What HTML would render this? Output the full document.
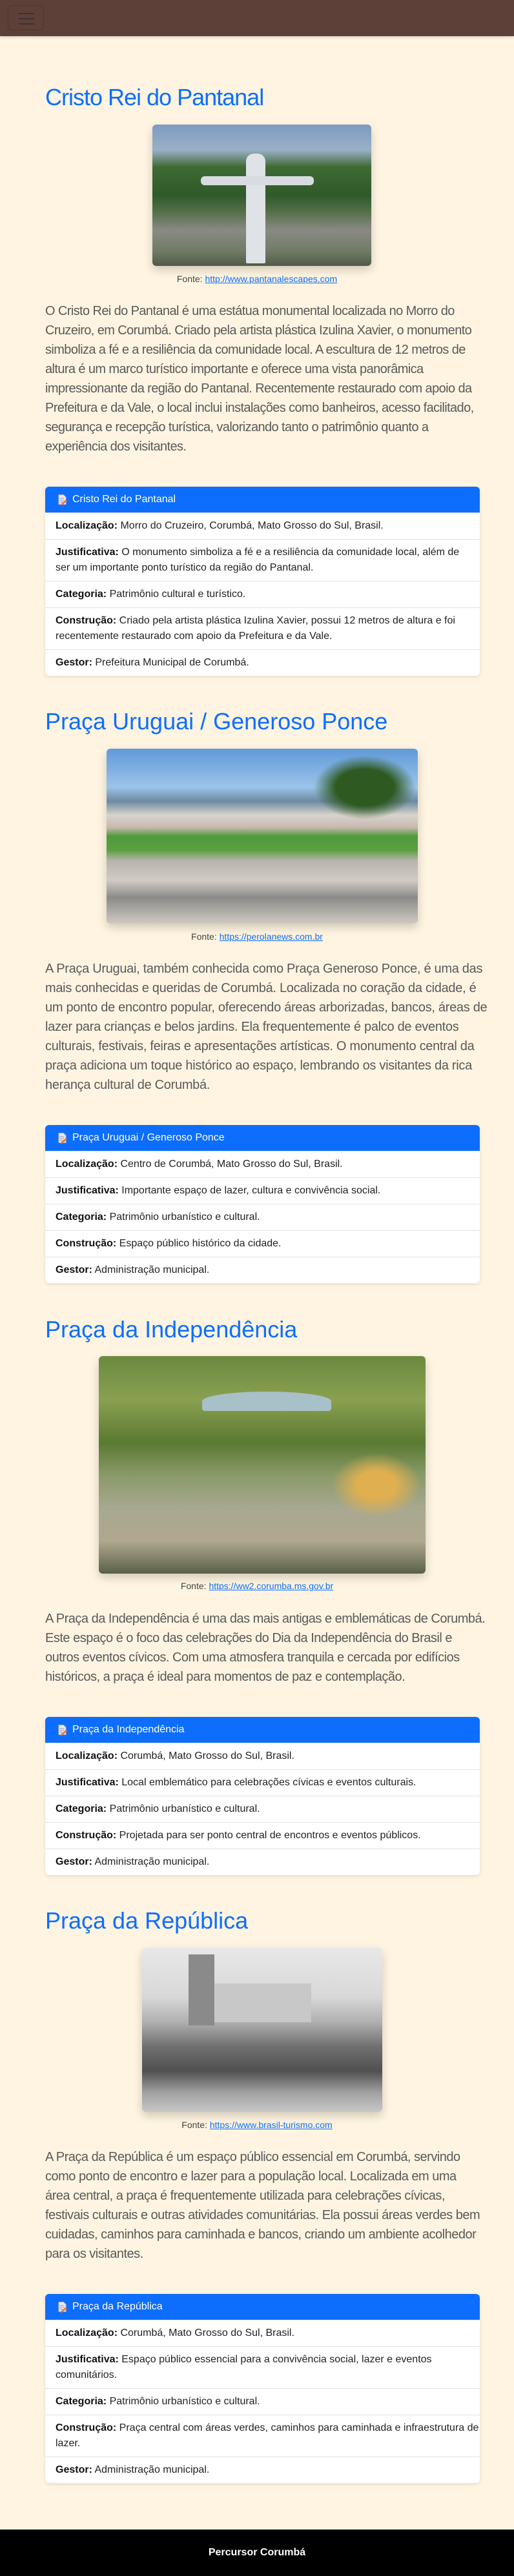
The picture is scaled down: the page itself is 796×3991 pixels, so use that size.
<!DOCTYPE html>
<html><head><meta charset="utf-8">
<style>
*{margin:0;padding:0;box-sizing:border-box}
html,body{width:796px;height:3991px;background:#fef4e1;font-family:"Liberation Sans",sans-serif;position:relative;overflow:hidden}
.nav{position:absolute;left:0;top:0;width:796px;height:56px;background:#5d4037;box-shadow:0 2px 4px rgba(0,0,0,.15)}
.tog{position:absolute;left:12px;top:8px;width:56px;height:39px;border:1px solid rgba(0,0,0,.15);border-radius:6px}
.tog i{position:absolute;left:16px;width:24px;height:2px;background:#3a3330}
.h{position:absolute;left:70px;color:#0d6efd;line-height:1;white-space:nowrap;font-weight:400}
.img{position:absolute;border-radius:6px;box-shadow:0 6px 14px rgba(0,0,0,.18);overflow:hidden}
.cap{position:absolute;left:0;width:796px;text-align:center;font-size:14px;line-height:20px;color:#444}
.cap a{color:#0d6efd;text-decoration:underline}
.p{position:absolute;left:70px;font-size:20px;line-height:30px;color:#5a5a5a;white-space:nowrap;letter-spacing:-0.3px}
.card{position:absolute;left:70px;width:673px;background:#fff;border-radius:6px;box-shadow:0 2px 6px rgba(0,0,0,.1);overflow:hidden}
.ch{height:40px;background:#0d6efd;color:#fff;font-size:16px;line-height:40px;padding-left:42px;position:relative}
.ch svg{position:absolute;left:19px;top:11px}
.r{border-top:1px solid #e2e2e2;padding:8px 16px;font-size:16px;line-height:24px;color:#222;white-space:nowrap}
.r b{color:#111}
.foot{position:absolute;left:0;top:3919px;width:796px;height:72px;background:#000;color:#fff;font-weight:bold;font-size:16px;text-align:center;line-height:72px}
</style></head><body>
<div class="nav"><div class="tog"><i style="top:11px"></i><i style="top:19px"></i><i style="top:27px"></i></div></div>

<svg width="0" height="0" style="position:absolute"><defs>
<symbol id="ic" viewBox="0 0 16 18"><path d="M2 1h8l4 4v12H2z" fill="#e8e8ee" stroke="#aab" stroke-width="1"/><path d="M4 7h7M4 10h7M4 13h5" stroke="#99a" stroke-width="1"/><path d="M6 16l8-7 2 2-8 7-3 1z" fill="#f07040"/></symbol>
</defs></svg>

<!-- Section 1 -->
<div class="h" style="top:133px;font-size:36px;letter-spacing:-1px">Cristo Rei do Pantanal</div>
<div class="img" style="left:236px;top:193px;width:339px;height:219px;background:linear-gradient(180deg,#7d9ac0 0%,#9ab0c8 18%,#3f6a34 30%,#2f5a2a 50%,#55704a 62%,#8a8a84 75%,#6f7a64 90%,#505a48 100%)">
<div style="position:absolute;left:145px;top:45px;width:30px;height:170px;background:#dfe2e6;border-radius:12px 12px 2px 2px"></div>
<div style="position:absolute;left:75px;top:80px;width:175px;height:14px;background:#d8dce0;border-radius:6px"></div>
</div>
<div class="cap" style="top:422px">Fonte: <a>http://www.pantanalescapes.com</a></div>
<div class="p" style="top:467px;letter-spacing:-0.6px">O Cristo Rei do Pantanal é uma estátua monumental localizada no Morro do<br>Cruzeiro, em Corumbá. Criado pela artista plástica Izulina Xavier, o monumento<br>simboliza a fé e a resiliência da comunidade local. A escultura de 12 metros de<br>altura é um marco turístico importante e oferece uma vista panorâmica<br>impressionante da região do Pantanal. Recentemente restaurado com apoio da<br>Prefeitura e da Vale, o local inclui instalações como banheiros, acesso facilitado,<br>segurança e recepção turística, valorizando tanto o patrimônio quanto a<br>experiência dos visitantes.</div>
<div class="card" style="top:754px">
<div class="ch"><svg width="15" height="18"><use href="#ic"/></svg>Cristo Rei do Pantanal</div>
<div class="r"><b>Localização:</b> Morro do Cruzeiro, Corumbá, Mato Grosso do Sul, Brasil.</div>
<div class="r"><b>Justificativa:</b> O monumento simboliza a fé e a resiliência da comunidade local, além de<br>ser um importante ponto turístico da região do Pantanal.</div>
<div class="r"><b>Categoria:</b> Patrimônio cultural e turístico.</div>
<div class="r"><b>Construção:</b> Criado pela artista plástica Izulina Xavier, possui 12 metros de altura e foi<br>recentemente restaurado com apoio da Prefeitura e da Vale.</div>
<div class="r"><b>Gestor:</b> Prefeitura Municipal de Corumbá.</div>
</div>

<!-- Section 2 -->
<div class="h" style="top:1100px;font-size:36px">Praça Uruguai / Generoso Ponce</div>
<div class="img" style="left:165px;top:1160px;width:482px;height:271px;background:linear-gradient(180deg,#5f9ad8 0%,#9cc3ea 22%,#6d8aa0 30%,#d8d4cc 38%,#c8b8b0 45%,#4f9a3c 50%,#5aa040 58%,#b8b4ac 64%,#d0ccc4 75%,#8a8a88 85%,#cfcac0 100%)">
<div style="position:absolute;left:320px;top:10px;width:160px;height:100px;background:radial-gradient(ellipse,#2e5a22 40%,transparent 70%)"></div>
</div>
<div class="cap" style="top:1441px">Fonte: <a>https://perolanews.com.br</a></div>
<div class="p" style="top:1486px">A Praça Uruguai, também conhecida como Praça Generoso Ponce, é uma das<br>mais conhecidas e queridas de Corumbá. Localizada no coração da cidade, é<br>um ponto de encontro popular, oferecendo áreas arborizadas, bancos, áreas de<br>lazer para crianças e belos jardins. Ela frequentemente é palco de eventos<br>culturais, festivais, feiras e apresentações artísticas. O monumento central da<br>praça adiciona um toque histórico ao espaço, lembrando os visitantes da rica<br>herança cultural de Corumbá.</div>
<div class="card" style="top:1743px">
<div class="ch"><svg width="15" height="18"><use href="#ic"/></svg>Praça Uruguai / Generoso Ponce</div>
<div class="r"><b>Localização:</b> Centro de Corumbá, Mato Grosso do Sul, Brasil.</div>
<div class="r"><b>Justificativa:</b> Importante espaço de lazer, cultura e convivência social.</div>
<div class="r"><b>Categoria:</b> Patrimônio urbanístico e cultural.</div>
<div class="r"><b>Construção:</b> Espaço público histórico da cidade.</div>
<div class="r"><b>Gestor:</b> Administração municipal.</div>
</div>

<!-- Section 3 -->
<div class="h" style="top:2042px;font-size:36px">Praça da Independência</div>
<div class="img" style="left:153px;top:2101px;width:506px;height:337px;background:linear-gradient(180deg,#6a8a40 0%,#8aa050 20%,#5a7a32 40%,#8a9a6a 55%,#a8a890 70%,#b0a890 85%,#5a6048 100%)">
<div style="position:absolute;left:160px;top:55px;width:200px;height:30px;background:#a8c0c8;border-radius:50% 50% 4px 4px"></div>
<div style="position:absolute;left:360px;top:150px;width:140px;height:100px;background:radial-gradient(ellipse,#e0b050 30%,transparent 70%)"></div>
</div>
<div class="cap" style="top:2447px">Fonte: <a>https://ww2.corumba.ms.gov.br</a></div>
<div class="p" style="top:2493px;letter-spacing:-0.5px">A Praça da Independência é uma das mais antigas e emblemáticas de Corumbá.<br>Este espaço é o foco das celebrações do Dia da Independência do Brasil e<br>outros eventos cívicos. Com uma atmosfera tranquila e cercada por edifícios<br>históricos, a praça é ideal para momentos de paz e contemplação.</div>
<div class="card" style="top:2660px">
<div class="ch"><svg width="15" height="18"><use href="#ic"/></svg>Praça da Independência</div>
<div class="r"><b>Localização:</b> Corumbá, Mato Grosso do Sul, Brasil.</div>
<div class="r"><b>Justificativa:</b> Local emblemático para celebrações cívicas e eventos culturais.</div>
<div class="r"><b>Categoria:</b> Patrimônio urbanístico e cultural.</div>
<div class="r"><b>Construção:</b> Projetada para ser ponto central de encontros e eventos públicos.</div>
<div class="r"><b>Gestor:</b> Administração municipal.</div>
</div>

<!-- Section 4 -->
<div class="h" style="top:2958px;font-size:36px">Praça da República</div>
<div class="img" style="left:220px;top:3018px;width:372px;height:254px;background:linear-gradient(180deg,#e8e8e8 0%,#d8d8d8 30%,#b0b0b0 45%,#707070 60%,#505050 75%,#a0a0a0 88%,#c8c8c8 100%)">
<div style="position:absolute;left:72px;top:10px;width:40px;height:110px;background:#8a8a8a"></div>
<div style="position:absolute;left:112px;top:55px;width:150px;height:60px;background:#c8c8c8"></div>
</div>
<div class="cap" style="top:3282px">Fonte: <a>https://www.brasil-turismo.com</a></div>
<div class="p" style="top:3327px;letter-spacing:-0.5px">A Praça da República é um espaço público essencial em Corumbá, servindo<br>como ponto de encontro e lazer para a população local. Localizada em uma<br>área central, a praça é frequentemente utilizada para celebrações cívicas,<br>festivais culturais e outras atividades comunitárias. Ela possui áreas verdes bem<br>cuidadas, caminhos para caminhada e bancos, criando um ambiente acolhedor<br>para os visitantes.</div>
<div class="card" style="top:3554px">
<div class="ch"><svg width="15" height="18"><use href="#ic"/></svg>Praça da República</div>
<div class="r"><b>Localização:</b> Corumbá, Mato Grosso do Sul, Brasil.</div>
<div class="r"><b>Justificativa:</b> Espaço público essencial para a convivência social, lazer e eventos<br>comunitários.</div>
<div class="r"><b>Categoria:</b> Patrimônio urbanístico e cultural.</div>
<div class="r"><b>Construção:</b> Praça central com áreas verdes, caminhos para caminhada e infraestrutura de<br>lazer.</div>
<div class="r"><b>Gestor:</b> Administração municipal.</div>
</div>

<div class="foot">Percursor Corumbá</div>
</body></html>
